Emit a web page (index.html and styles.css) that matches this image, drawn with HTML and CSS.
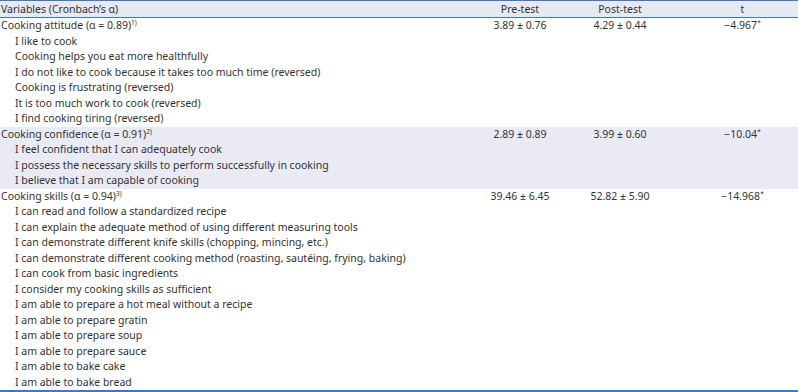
FILE: index.html
```html
<!DOCTYPE html>
<html>
<head>
<meta charset="utf-8">
<link rel="stylesheet" href="styles.css">
</head>
<body>
<table class="tbl">
  <colgroup>
    <col class="c-var"><col class="c-num"><col class="c-num"><col class="c-t">
  </colgroup>
  <thead>
    <tr><th class="l">Variables (Cronbach’s α)</th><th>Pre-test</th><th>Post-test</th><th class="tcol">t</th></tr>
  </thead>
  <tbody>
    <tr><td class="l">Cooking attitude (α = 0.89)<sup>1)</sup></td><td>3.89 ± 0.76</td><td>4.29 ± 0.44</td><td class="tcol">−4.967<sup>*</sup></td></tr>
    <tr><td class="l sub">I like to cook</td><td></td><td></td><td></td></tr>
    <tr><td class="l sub">Cooking helps you eat more healthfully</td><td></td><td></td><td></td></tr>
    <tr><td class="l sub">I do not like to cook because it takes too much time (reversed)</td><td></td><td></td><td></td></tr>
    <tr><td class="l sub">Cooking is frustrating (reversed)</td><td></td><td></td><td></td></tr>
    <tr><td class="l sub">It is too much work to cook (reversed)</td><td></td><td></td><td></td></tr>
    <tr><td class="l sub">I find cooking tiring (reversed)</td><td></td><td></td><td></td></tr>
  </tbody>
  <tbody class="shade">
    <tr><td class="l">Cooking confidence (α = 0.91)<sup>2)</sup></td><td>2.89 ± 0.89</td><td>3.99 ± 0.60</td><td class="tcol">−10.04<sup>*</sup></td></tr>
    <tr><td class="l sub">I feel confident that I can adequately cook</td><td></td><td></td><td></td></tr>
    <tr><td class="l sub">I possess the necessary skills to perform successfully in cooking</td><td></td><td></td><td></td></tr>
    <tr><td class="l sub">I believe that I am capable of cooking</td><td></td><td></td><td></td></tr>
  </tbody>
  <tbody>
    <tr><td class="l">Cooking skills (α = 0.94)<sup>3)</sup></td><td>39.46 ± 6.45</td><td>52.82 ± 5.90</td><td class="tcol">−14.968<sup>*</sup></td></tr>
    <tr><td class="l sub">I can read and follow a standardized recipe</td><td></td><td></td><td></td></tr>
    <tr><td class="l sub">I can explain the adequate method of using different measuring tools</td><td></td><td></td><td></td></tr>
    <tr><td class="l sub">I can demonstrate different knife skills (chopping, mincing, etc.)</td><td></td><td></td><td></td></tr>
    <tr><td class="l sub">I can demonstrate different cooking method (roasting, sautéing, frying, baking)</td><td></td><td></td><td></td></tr>
    <tr><td class="l sub">I can cook from basic ingredients</td><td></td><td></td><td></td></tr>
    <tr><td class="l sub">I consider my cooking skills as sufficient</td><td></td><td></td><td></td></tr>
    <tr><td class="l sub">I am able to prepare a hot meal without a recipe</td><td></td><td></td><td></td></tr>
    <tr><td class="l sub">I am able to prepare gratin</td><td></td><td></td><td></td></tr>
    <tr><td class="l sub">I am able to prepare soup</td><td></td><td></td><td></td></tr>
    <tr><td class="l sub">I am able to prepare sauce</td><td></td><td></td><td></td></tr>
    <tr><td class="l sub">I am able to bake cake</td><td></td><td></td><td></td></tr>
    <tr><td class="l sub">I am able to bake bread</td><td></td><td></td><td></td></tr>
  </tbody>
</table>
</body>
</html>
```
FILE: styles.css
```css
html, body { margin: 0; padding: 0; background: #fff; }
body {
  font-family: "Noto Sans", "Liberation Sans", sans-serif;
  font-size: 10.5px;
  color: #333;
}
.tbl {
  width: 798px;
  border-collapse: collapse;
  table-layout: fixed;
  border-top: 1px solid #3d78c4;
  border-bottom: 2px solid #3d78c4;
}
.c-var { width: 470px; }
.c-num { width: 100px; }
.c-t { width: 128px; }
th, td {
  padding: 0 1px;
  height: 15.5px;
  line-height: 15px;
  font-weight: normal;
  text-align: center;
  white-space: nowrap;
  vertical-align: middle;
}
thead th {
  background: #e6e8f2;
  height: 16px;
  border-bottom: 1px solid #3d78c4;
}
.l { text-align: left; }
.sub { padding-left: 15px; }
.tcol { padding-left: 18px; }
.shade td { background: #e9eaf4; }
sup {
  font-size: 6.5px;
  line-height: 0;
  vertical-align: 4px;
}
```
